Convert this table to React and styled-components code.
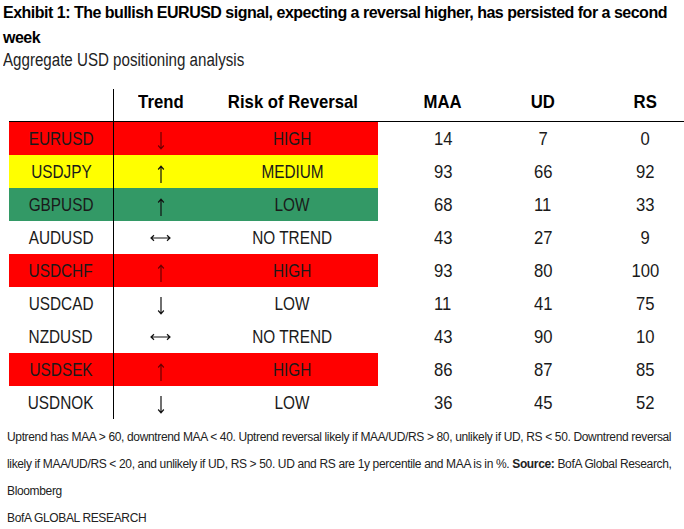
import React from 'react';
import styled, { createGlobalStyle } from 'styled-components';

const GlobalStyle = createGlobalStyle`
  html, body {
    margin: 0;
    padding: 0;
    background: #fff;
  }
  body {
    font-family: "Liberation Sans", Arial, sans-serif;
    color: #1a1a1a;
  }
`;

const COLORS = {
  red: '#ff0000',
  yellow: '#ffff00',
  green: '#339966',
};

const ROWS = [
  { pair: 'EURUSD', trend: 'down', risk: 'HIGH', maa: 14, ud: 7, rs: 0, bg: 'red' },
  { pair: 'USDJPY', trend: 'up', risk: 'MEDIUM', maa: 93, ud: 66, rs: 92, bg: 'yellow' },
  { pair: 'GBPUSD', trend: 'up', risk: 'LOW', maa: 68, ud: 11, rs: 33, bg: 'green' },
  { pair: 'AUDUSD', trend: 'flat', risk: 'NO TREND', maa: 43, ud: 27, rs: 9 },
  { pair: 'USDCHF', trend: 'up', risk: 'HIGH', maa: 93, ud: 80, rs: 100, bg: 'red' },
  { pair: 'USDCAD', trend: 'down', risk: 'LOW', maa: 11, ud: 41, rs: 75 },
  { pair: 'NZDUSD', trend: 'flat', risk: 'NO TREND', maa: 43, ud: 90, rs: 10 },
  { pair: 'USDSEK', trend: 'up', risk: 'HIGH', maa: 86, ud: 87, rs: 85, bg: 'red' },
  { pair: 'USDNOK', trend: 'down', risk: 'LOW', maa: 36, ud: 45, rs: 52 },
];

const Page = styled.div`
  width: 684px;
  height: 529px;
  overflow: hidden;
`;

const Title = styled.h1`
  margin: 0;
  padding: 0 6px 0 3px;
  font-size: 16px;
  line-height: 25px;
  font-weight: 700;
  letter-spacing: -0.5px;
  color: #000;
`;

const Subtitle = styled.div`
  padding-left: 3px;
  font-size: 18px;
  line-height: 20px;
  color: #222;
  span {
    display: inline-block;
    transform: scaleX(0.84);
    transform-origin: left center;
    white-space: nowrap;
  }
`;

const Table = styled.div`
  margin: 19px 0 0 9px;
  width: 675px;
`;

const Row = styled.div`
  display: grid;
  grid-template-columns: 104px 94px 171px 115px 100px 91px;
  height: ${p => (p.$head ? '32px' : '33px')};
  border-bottom: ${p => (p.$head ? '1px solid #000' : 'none')};
`;

const Cell = styled.div`
  display: flex;
  align-items: center;
  justify-content: center;
  font-size: ${p => (p.$head ? '19px' : '18.5px')};
  font-weight: ${p => (p.$head ? 700 : 400)};
  color: ${p => (p.$head ? '#000' : '#1a1a1a')};
  padding-left: ${p => p.$pl || 0}px;
  padding-bottom: ${p => (p.$head ? '6px' : '0')};
  background: ${p => (p.$bg ? COLORS[p.$bg] : 'transparent')};
  border-left: ${p => (p.$divider ? '1px solid #000' : 'none')};
  box-sizing: border-box;
  white-space: nowrap;
`;

const Squeeze = styled.span`
  display: inline-block;
  transform: scaleX(${p => p.$x || 0.83});
`;

const ArrowSvg = styled.svg`
  display: block;
  margin-top: ${p => (p.$flat ? '0' : '4px')};
  stroke: ${p => (p.$onRed ? '#6a0000' : '#111')};
  stroke-width: 1.2;
  fill: none;
`;

function TrendArrow({ dir, onRed }) {
  if (dir === 'flat') {
    return (
      <ArrowSvg $flat $onRed={onRed} width="21" height="8" viewBox="0 0 21 8">
        <path d="M1 4H20M4 1.2L1 4l3 2.8M17 1.2L20 4l-3 2.8" />
      </ArrowSvg>
    );
  }
  const d = dir === 'up'
    ? 'M4 1.2V18M1.2 4.5L4 1.2l2.8 3.3'
    : 'M4 0V16.8M1.2 13.5L4 16.8l2.8-3.3';
  return (
    <ArrowSvg $onRed={onRed} width="8" height="18" viewBox="0 0 8 18">
      <path d={d} />
    </ArrowSvg>
  );
}

const Footer = styled.div`
  margin-top: 5px;
  padding: 0 6px 0 7px;
  font-size: 12px;
  line-height: 27px;
  letter-spacing: -0.35px;
  color: #222;
`;

const Note = styled.p`
  margin: 0;
`;

export default function App() {
  return (
    <Page>
      <GlobalStyle />
      <Title>
        Exhibit 1: The bullish EURUSD signal, expecting a reversal higher, has persisted for a second week
      </Title>
      <Subtitle>
        <span>Aggregate USD positioning analysis</span>
      </Subtitle>

      <Table>
        <Row $head>
          <Cell $head />
          <Cell $head $divider><Squeeze $x={0.88}>Trend</Squeeze></Cell>
          <Cell $head><Squeeze $x={0.88}>Risk of Reversal</Squeeze></Cell>
          <Cell $head $pl={15}><Squeeze $x={0.88}>MAA</Squeeze></Cell>
          <Cell $head><Squeeze $x={0.88}>UD</Squeeze></Cell>
          <Cell $head $pl={13}><Squeeze $x={0.88}>RS</Squeeze></Cell>
        </Row>
        {ROWS.map(r => (
          <Row key={r.pair}>
            <Cell $bg={r.bg}><Squeeze>{r.pair}</Squeeze></Cell>
            <Cell $bg={r.bg} $divider>
              <TrendArrow dir={r.trend} onRed={r.bg === 'red'} />
            </Cell>
            <Cell $bg={r.bg}><Squeeze>{r.risk}</Squeeze></Cell>
            <Cell $pl={15}><Squeeze $x={0.9}>{r.maa}</Squeeze></Cell>
            <Cell><Squeeze $x={0.9}>{r.ud}</Squeeze></Cell>
            <Cell $pl={13}><Squeeze $x={0.9}>{r.rs}</Squeeze></Cell>
          </Row>
        ))}
      </Table>

      <Footer>
        <Note>
          Uptrend has MAA &gt; 60, downtrend MAA &lt; 40. Uptrend reversal likely if MAA/UD/RS &gt; 80, unlikely if UD, RS &lt; 50. Downtrend reversal likely if MAA/UD/RS &lt; 20, and unlikely if UD, RS &gt; 50. UD and RS are 1y percentile and MAA is in %. <b>Source:</b> BofA Global Research, Bloomberg
        </Note>
        <Note>BofA GLOBAL RESEARCH</Note>
      </Footer>
    </Page>
  );
}
